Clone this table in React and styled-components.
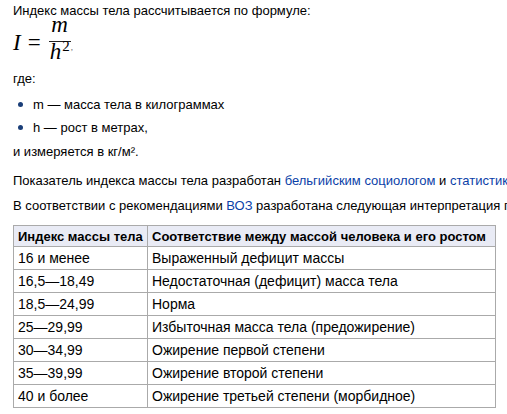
import React from 'react'
import styled, { createGlobalStyle } from 'styled-components'

const GlobalStyle = createGlobalStyle`
  body {
    margin: 0;
    background: #fff;
    font-family: "Liberation Sans", Arial, sans-serif;
    font-size: 13px;
    color: #000;
  }
`

const Page = styled.div`
  width: 507px;
  height: 414px;
  overflow: hidden;
  padding: 3px 0 0 13px;
  box-sizing: border-box;
  white-space: nowrap;
`

const Para = styled.p`
  margin: ${({ $top }) => $top || 0}px 0 0 0;
  line-height: 16px;
`

const Link = styled.a`
  color: #0b3fa8;
  text-decoration: none;
`

const Formula = styled.div`
  display: flex;
  align-items: flex-start;
  font-family: "Liberation Serif", "Times New Roman", serif;
  font-size: 23px;
  line-height: 12px;
`

const Lhs = styled.span`
  margin-top: 18px;
  white-space: pre;
  i {
    margin-right: 7px;
  }
`

const Eq = styled.span`
  margin-right: 8px;
`

const Fraction = styled.span`
  display: inline-flex;
  flex-direction: column;
  align-items: center;
  font-style: italic;
`

const Numer = styled.span`
  line-height: 12px;
  padding: 0 2px 10px;
`

const Denom = styled.span`
  line-height: 20px;
  border-top: 1px solid #222;
  padding: 0 1px;
  sup {
    font-style: normal;
    font-size: 15px;
    vertical-align: 8px;
    line-height: 0;
    margin-left: 1px;
  }
`

const Comma = styled.span`
  font-size: 9px;
  margin-top: 22px;
  color: #666;
`

const List = styled.ul`
  list-style: none;
  margin: 6px 0 0 0;
  padding: 0;
`

const Item = styled.li`
  display: flex;
  align-items: center;
  height: 23px;
  padding-left: 5px;
  &::before {
    content: '';
    width: 5px;
    height: 5px;
    border-radius: 50%;
    background: #1a3e78;
    margin-right: 10px;
  }
`

const Table = styled.table`
  margin-top: 11px;
  border-collapse: collapse;
  width: 483px;
`

const Th = styled.th`
  background: #e9ebf5;
  border: 1px solid #aaa;
  text-align: left;
  font-size: 13px;
  font-weight: bold;
  height: 20px;
  padding: 0 4px;
  width: ${({ $w }) => $w || 'auto'};
`

const Td = styled.td`
  border: 1px solid #aaa;
  font-size: 14px;
  height: 22px;
  padding: 0 4px;
`

const rows = [
  ['16 и менее', 'Выраженный дефицит массы'],
  ['16,5—18,49', 'Недостаточная (дефицит) масса тела'],
  ['18,5—24,99', 'Норма'],
  ['25—29,99', 'Избыточная масса тела (предожирение)'],
  ['30—34,99', 'Ожирение первой степени'],
  ['35—39,99', 'Ожирение второй степени'],
  ['40 и более', 'Ожирение третьей степени (морбидное)'],
]

const App = () => {
  return (
    <>
      <GlobalStyle />
      <Page>
        <Para>Индекс массы тела рассчитывается по формуле:</Para>
        <Formula>
          <Lhs>
            <i>I</i>
            <Eq>=</Eq>
          </Lhs>
          <Fraction>
            <Numer>m</Numer>
            <Denom>h<sup>2</sup></Denom>
          </Fraction>
          <Comma>,</Comma>
        </Formula>
        <Para $top={9}>где:</Para>
        <List>
          <Item>m — масса тела в килограммах</Item>
          <Item>h — рост в метрах,</Item>
        </List>
        <Para $top={5}>и измеряется в кг/м².</Para>
        <Para $top={13}>
          Показатель индекса массы тела разработан <Link href="#">бельгийским социологом</Link> и <Link href="#">статистиком Адольфом Кетле</Link>
        </Para>
        <Para $top={9}>
          В соответствии с рекомендациями <Link href="#">ВОЗ</Link> разработана следующая интерпретация показателей ИМТ
        </Para>
        <Table>
          <thead>
            <tr>
              <Th $w="125px">Индекс массы тела</Th>
              <Th>Соответствие между массой человека и его ростом</Th>
            </tr>
          </thead>
          <tbody>
            {rows.map(([a, b]) => (
              <tr key={a}>
                <Td>{a}</Td>
                <Td>{b}</Td>
              </tr>
            ))}
          </tbody>
        </Table>
      </Page>
    </>
  )
}

export default App
